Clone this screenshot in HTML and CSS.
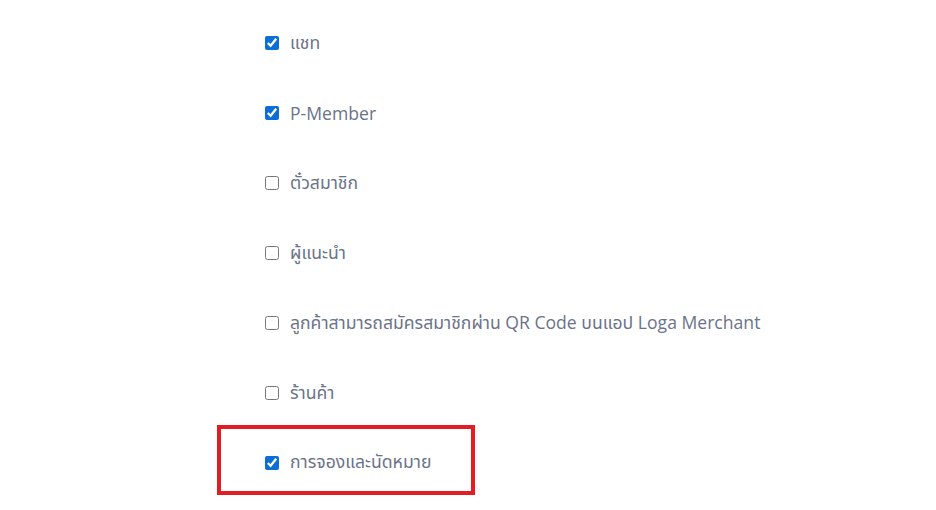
FILE: index.html
```html
<!DOCTYPE html>
<html lang="th">
<head>
<meta charset="utf-8">
<link rel="stylesheet" href="styles.css">
</head>
<body>
<div class="list">
  <label class="item"><input type="checkbox" checked><span>แชท</span></label>
  <label class="item"><input type="checkbox" checked><span>P-Member</span></label>
  <label class="item"><input type="checkbox"><span>ตั๋วสมาชิก</span></label>
  <label class="item"><input type="checkbox"><span>ผู้แนะนำ</span></label>
  <label class="item"><input type="checkbox"><span>ลูกค้าสามารถสมัครสมาชิกผ่าน QR Code บนแอป Loga Merchant</span></label>
  <label class="item"><input type="checkbox"><span>ร้านค้า</span></label>
  <div class="highlight">
    <label class="item"><input type="checkbox" checked><span>การจองและนัดหมาย</span></label>
  </div>
</div>
</body>
</html>
```
FILE: styles.css
```css
html, body {
  margin: 0;
  padding: 0;
  background: #ffffff;
}
body {
  font-family: "Open Sans", "Noto Sans", "Noto Sans Thai", sans-serif;
  color: #6b7389;
}
.list {
  display: flex;
  flex-direction: column;
  padding-top: 8px;
  padding-left: 265px;
}
.item {
  display: flex;
  align-items: center;
  gap: 11px;
  height: 70px;
  font-size: 17.6px;
  width: max-content;
}
.item input {
  margin: 0;
  width: 14px;
  height: 14px;
  accent-color: #0b6fd6;
}
.highlight {
  margin-left: -48px;
  padding-left: 44px;
  padding-top: 5px;
  width: 258px;
  border: 4px solid #e31b23;
  box-sizing: border-box;
  height: 70px;
  display: flex;
  align-items: center;
  margin-top: -3px;
}
.highlight .item {
  height: auto;
}
```
